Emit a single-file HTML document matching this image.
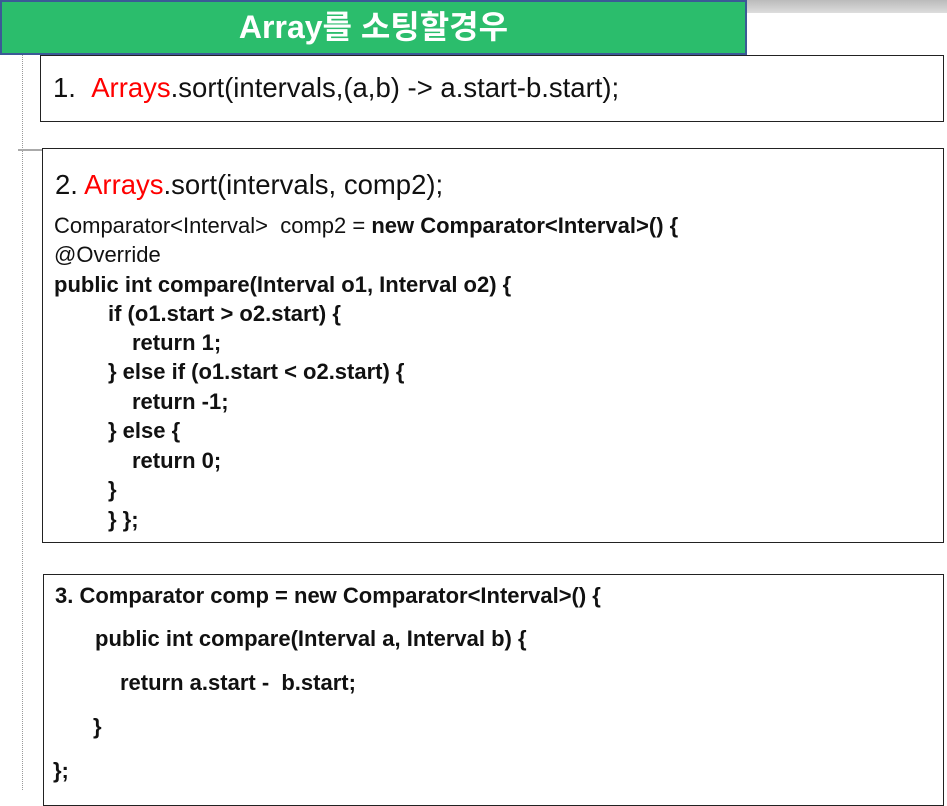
<!DOCTYPE html>
<html><head><meta charset="utf-8"><style>
body{margin:0;width:947px;height:790px;background:#fff;position:relative;overflow:hidden;font-family:"Liberation Sans",sans-serif;color:#111}
.abs{position:absolute}
.box{position:absolute;border:1px solid #222;background:#fff}
.l{position:absolute;white-space:nowrap;font-size:22px;line-height:24px;letter-spacing:0}
.r{color:#f00}
b{font-weight:bold}
</style></head><body>
<div class="abs" style="left:747px;top:0;width:200px;height:13px;background:linear-gradient(#bbb,#ddd)"></div>
<div class="abs" style="left:22px;top:0;height:790px;border-left:1px dotted #999"></div>
<div class="abs" style="left:18px;top:149px;width:24px;border-top:2px solid #aaa"></div>
<div class="abs" style="left:0;top:0;width:747px;height:55px;background:#2bbd6c;border:2px solid #3b5a96;box-sizing:border-box;color:#fff;font:bold 32px 'Liberation Sans','Noto Sans CJK KR',sans-serif;text-align:center;line-height:51px">Array를 소팅할경우</div>
<div class="box" style="left:40px;top:55px;width:902px;height:65px"></div>
<div class="l" style="left:53px;top:72px;font-size:27.5px;line-height:32px">1. &nbsp;<span class="r">Arrays</span>.sort(intervals,(a,b) -&gt; a.start-b.start);</div>
<div class="box" style="left:42px;top:148px;width:900px;height:393px"></div>
<div class="l" style="left:55px;top:169px;font-size:27.5px;line-height:32px">2. <span class="r">Arrays</span>.sort(intervals, comp2);</div>
<div class="l" style="left:54px;top:214px">Comparator&lt;Interval&gt; &nbsp;comp2 = <b>new Comparator&lt;Interval&gt;() {</b></div>
<div class="l" style="left:54px;top:243px">@Override</div>
<div class="l" style="left:54px;top:273px"><b>public int compare(Interval o1, Interval o2) {</b></div>
<div class="l" style="left:108px;top:302px"><b>if (o1.start &gt; o2.start) {</b></div>
<div class="l" style="left:132px;top:331px"><b>return 1;</b></div>
<div class="l" style="left:108px;top:360px"><b>} else if (o1.start &lt; o2.start) {</b></div>
<div class="l" style="left:132px;top:390px"><b>return -1;</b></div>
<div class="l" style="left:108px;top:419px"><b>} else {</b></div>
<div class="l" style="left:132px;top:449px"><b>return 0;</b></div>
<div class="l" style="left:108px;top:478px"><b>}</b></div>
<div class="l" style="left:108px;top:508px"><b>} };</b></div>
<div class="box" style="left:43px;top:574px;width:899px;height:230px"></div>
<div class="l" style="left:55px;top:584px"><b>3. Comparator comp = new Comparator&lt;Interval&gt;() {</b></div>
<div class="l" style="left:95px;top:627px"><b>public int compare(Interval a, Interval b) {</b></div>
<div class="l" style="left:120px;top:671px"><b>return a.start - &nbsp;b.start;</b></div>
<div class="l" style="left:93px;top:715px"><b>}</b></div>
<div class="l" style="left:53px;top:759px"><b>};</b></div>
</body></html>
